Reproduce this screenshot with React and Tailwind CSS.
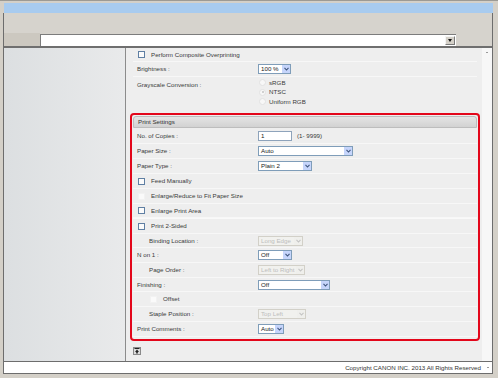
const Chevron = ({ disabled }) => (
  <svg width="5" height="4" viewBox="0 0 5 4">
    <path d="M0.5 0.8 L2.5 3 L4.5 0.8" fill="none" stroke={disabled ? "#c4c4c4" : "#3f557e"} strokeWidth="1.1" />
  </svg>
);

const Select = ({ value, className, disabled }) => (
  <div
    className={`flex items-center justify-between h-[10px] border ${
      disabled ? "border-[#d2d0c8] bg-[#f1f1ee] text-[#bdbdbd]" : "border-[#7f9db9] bg-white text-[#222]"
    } ${className}`}
  >
    <span className="pl-[2px] leading-[8px]">{value}</span>
    <span
      className={`flex items-center justify-center w-[8px] h-[8px] mr-[0px] ${
        disabled ? "bg-[#efefec]" : "bg-[#c6d5fb]"
      }`}
    >
      <Chevron disabled={disabled} />
    </span>
  </div>
);

const Checkbox = ({ disabled }) => (
  <span
    className={`inline-block w-[7px] h-[7px] border ${
      disabled ? "border-[#f2f2f2] bg-[#fafafa]" : "border-[#5f7fa3] bg-[#fbfbfb]"
    }`}
  />
);

const Radio = ({ checked }) => (
  <span className="flex items-center justify-center w-[7px] h-[7px] rounded-full border border-[#e2e2e2] bg-[#f7f7f7]">
    {checked && <span className="w-[2px] h-[2px] rounded-full bg-[#c4c4c4]" />}
  </span>
);

const Row = ({ label, indent, h, children }) => (
  <div className={`flex items-center border-b border-[#f7f7f7] ${h || "h-[15px]"}`}>
    <div className={`w-[125px] shrink-0 text-[#3a3a3a] ${indent ? "pl-[16px]" : "pl-[4px]"}`}>{label}</div>
    <div className="flex items-center">{children}</div>
  </div>
);

const CheckRow = ({ label, disabled, indent, h }) => (
  <div className={`flex items-center border-b border-[#f7f7f7] ${h || "h-[15px]"} ${indent ? "pl-[17px]" : "pl-[5px]"}`}>
    <Checkbox disabled={disabled} />
    <span className="ml-[6px] text-[#3a3a3a]">{label}</span>
  </div>
);

export default function App() {
  return (
    <div
      className="w-[498px] h-[378px] flex flex-col bg-[#d4d0c8] pl-[3px] pr-[5px] pt-[2px] pb-[4px] border-t border-[#9c9a94] text-[6.2px] leading-[8px]"
      style={{ fontFamily: '"Liberation Sans", Arial, sans-serif' }}
    >
      <div className="h-[10px] ml-[1px] bg-[#a8cbef]" />
      <div className="flex-1 flex flex-col border-l border-r border-b border-[#6d6d6d]">
        {/* toolbar */}
        <div className="h-[20px] bg-[#d6d3cd]" />
        {/* address row */}
        <div className="h-[13px] flex items-start bg-[#d6d3cd]">
          <div className="w-[36px] h-[13px] bg-[#ccc8c0]" />
          <div className="w-[416px] h-[12px] mt-[1px] bg-white border-t border-l border-[#7c7c7c] flex justify-end items-center pr-[1px]">
            <div className="w-[10px] h-[9px] bg-[#d4d0c8] border border-t-[#f4f4f4] border-l-[#f4f4f4] border-r-[#7a7a7a] border-b-[#7a7a7a] flex items-center justify-center">
              <svg width="4" height="3" viewBox="0 0 4 3">
                <path d="M0 0 H4 L2 3 Z" fill="#111" />
              </svg>
            </div>
          </div>
        </div>
        <div className="h-[2px] bg-[#6f6f6f]" />

        {/* main */}
        <div className="flex-1 flex min-h-0">
          <div className="w-[122px] shrink-0 border-r border-[#8c8c8c] bg-gradient-to-r from-[#dcdfe1] to-[#e9eaeb]" />
          <div className="flex-1 bg-[#eeeeee] pl-[4px] pr-[2px]">
            {/* section above */}
            <div className="px-[3px]">
              <CheckRow label="Perform Composite Overprinting" h="h-[14px]" />
              <Row label="Brightness :">
                <Select value="100 %" className="w-[33px]" />
              </Row>
              <div className="flex items-start h-[31px]">
                <div className="w-[125px] pl-[4px] pt-[4px] text-[#3a3a3a]">Grayscale Conversion :</div>
                <div className="flex flex-col pt-[1px] pl-[1px] text-[#3a3a3a]">
                  <div className="flex items-center h-[9.5px]">
                    <Radio />
                    <span className="ml-[3px]">sRGB</span>
                  </div>
                  <div className="flex items-center h-[9.5px]">
                    <Radio checked />
                    <span className="ml-[3px]">NTSC</span>
                  </div>
                  <div className="flex items-center h-[9.5px]">
                    <Radio />
                    <span className="ml-[3px]">Uniform RGB</span>
                  </div>
                </div>
              </div>
            </div>

            {/* print settings */}
            <div className="mt-[5px] border-2 border-[#e3061a] rounded-[4px] p-[1px] pb-[2px]">
              <div className="h-[12px] flex items-center pl-[4px] rounded-t-[3px] border border-[#bdbdbd] bg-gradient-to-b from-[#e4e4e4] to-[#d2d2d2] text-[#333]">
                Print Settings
              </div>
              <Row label="No. of Copies :" h="h-[16px]">
                <div className="w-[34px] h-[10px] border border-[#8ea3bb] bg-white pl-[2px] leading-[8px] text-[#222]">1</div>
                <span className="ml-[5px] text-[#3a3a3a]">(1- 9999)</span>
              </Row>
              <Row label="Paper Size :">
                <Select value="Auto" className="w-[95px]" />
              </Row>
              <Row label="Paper Type :">
                <Select value="Plain 2" className="w-[54px]" />
              </Row>
              <CheckRow label="Feed Manually" />
              <CheckRow label="Enlarge/Reduce to Fit Paper Size" disabled />
              <CheckRow label="Enlarge Print Area" h="h-[14px]" />
              <div className="h-[1px] bg-[#f9f9f9]" />
              <CheckRow label="Print 2-Sided" />
              <Row label="Binding Location :" indent h="h-[14px]">
                <Select value="Long Edge" className="w-[45px]" disabled />
              </Row>
              <Row label="N on 1 :">
                <Select value="Off" className="w-[34px]" />
              </Row>
              <Row label="Page Order :" indent>
                <Select value="Left to Right" className="w-[47px]" disabled />
              </Row>
              <Row label="Finishing :" h="h-[14px]">
                <Select value="Off" className="w-[72px]" />
              </Row>
              <CheckRow label="Offset" disabled indent />
              <Row label="Staple Position :" indent>
                <Select value="Top Left" className="w-[48px]" disabled />
              </Row>
              <Row label="Print Comments :">
                <Select value="Auto" className="w-[26px]" />
              </Row>
            </div>

            <div className="mt-[6px] ml-[3px] w-[8px] h-[8px] border border-[#8a8a8a] bg-[#dcdcdc] flex items-center justify-center">
              <svg width="6" height="6" viewBox="0 0 6 6">
                <path d="M0.5 0.5 H5.5" stroke="#222" strokeWidth="1" />
                <path d="M3 1.5 L5 4 H3.8 V5.5 H2.2 V4 H1 Z" fill="#222" />
              </svg>
            </div>
          </div>
          <div className="w-[10px] shrink-0 bg-[#f7f7f7] flex justify-center pt-[4px]">
            <span className="block w-[2px] h-[1px] bg-[#9a9a9a]" />
          </div>
        </div>

        <div className="h-[1px] bg-[#6d6d6d]" />
        {/* status bar */}
        <div className="h-[11px] bg-white flex items-center justify-end text-[#333]">
          <span>Copyright CANON INC. 2013 All Rights Reserved</span>
          <span className="w-[11px] flex justify-center">
            <span className="block w-[2px] h-[1px] bg-[#9a9a9a] ml-[3px]" />
          </span>
        </div>
      </div>
    </div>
  );
}
